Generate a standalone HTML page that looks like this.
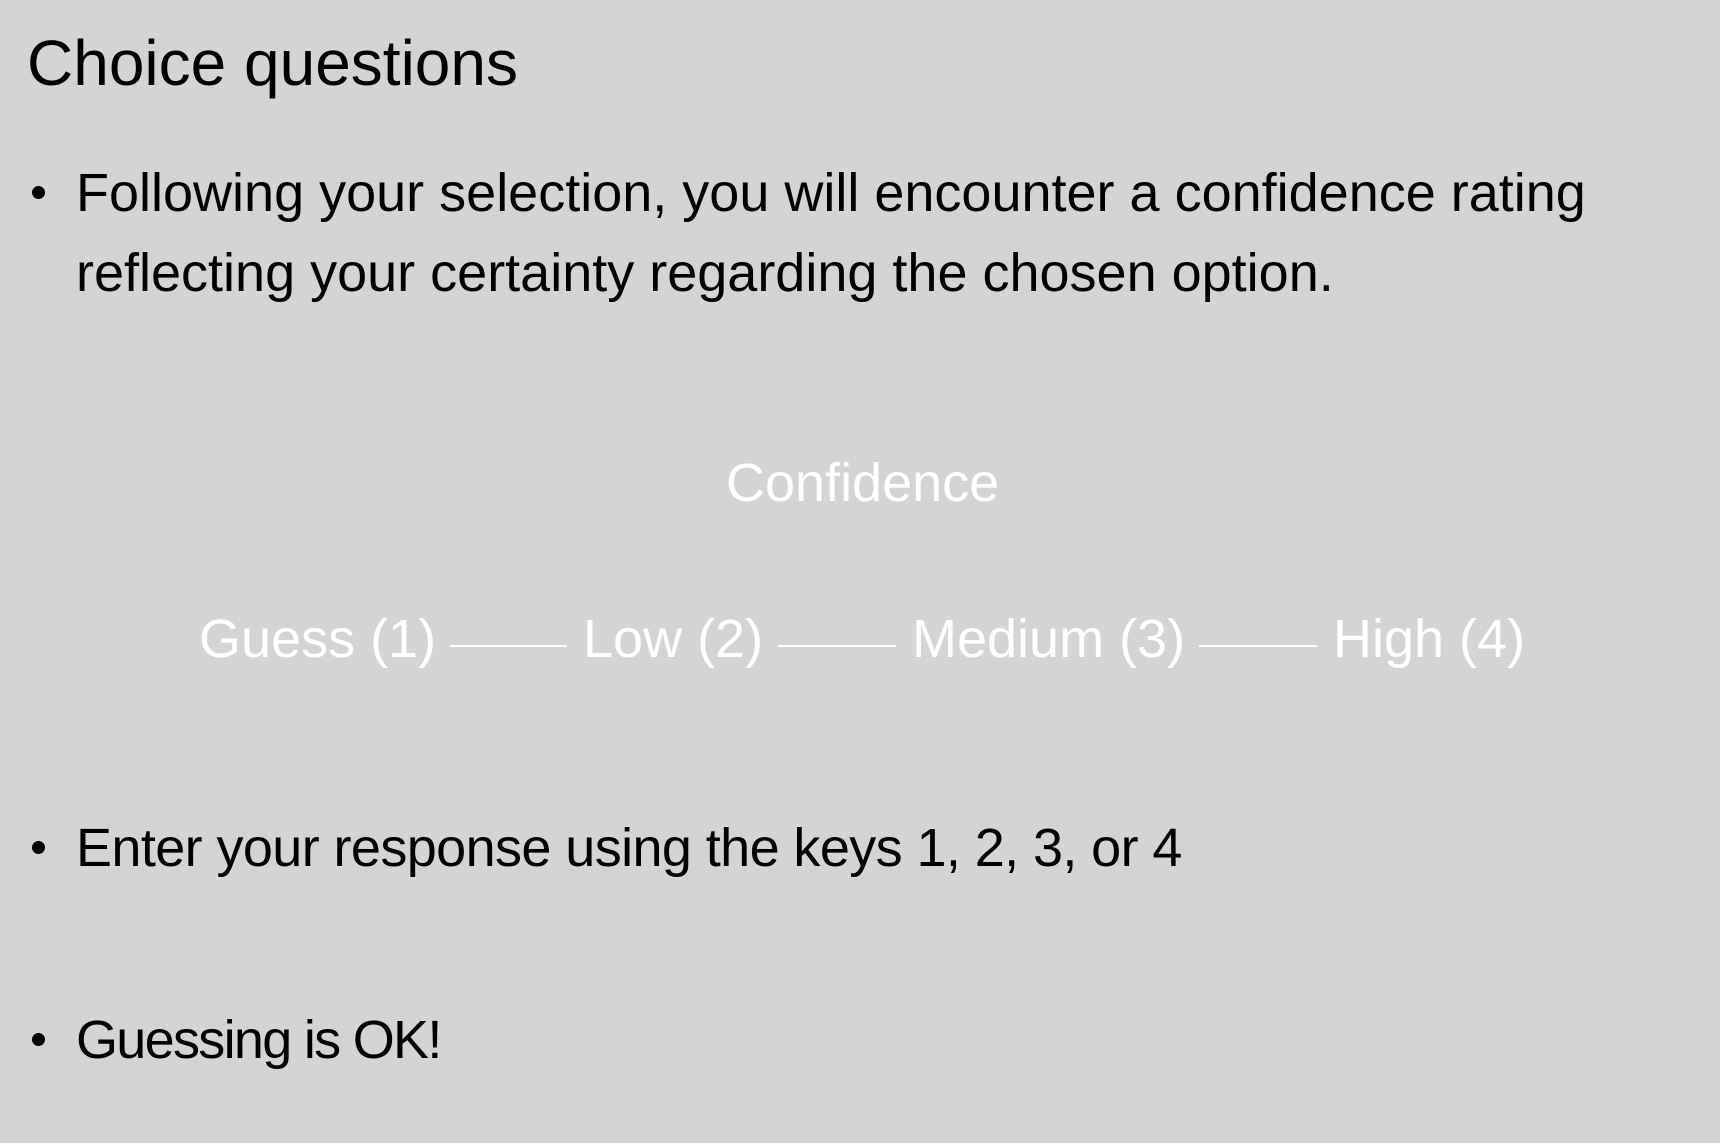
<!DOCTYPE html>
<html><head><meta charset="utf-8"><style>
html,body{margin:0;padding:0}
body{width:1720px;height:1143px;background:#d4d4d4;position:relative;overflow:hidden;font-family:"Liberation Sans",sans-serif}
.t{position:absolute;white-space:nowrap;line-height:1;color:#000}
.w{position:absolute;white-space:nowrap;line-height:1;color:#fff;font-size:54px}
.ln{position:absolute;height:2px;background:#fff;top:645px}
.b{position:absolute;width:13px;height:13px;border-radius:50%;background:#000}
</style></head><body>
<div class="t" style="left:27px;top:31px;font-size:64px">Choice questions</div>
<div class="b" style="left:32px;top:186px"></div>
<div class="t" style="left:76px;top:166px;font-size:54px">Following your selection, you will encounter a confidence rating</div>
<div class="t" style="left:76px;top:246px;font-size:54px">reflecting your certainty regarding the chosen option.</div>
<div class="w" style="left:726px;top:456px">Confidence</div>
<div class="w" style="left:199px;top:612px">Guess (1)</div>
<div class="ln" style="left:450px;width:117px"></div>
<div class="w" style="left:583px;top:612px">Low (2)</div>
<div class="ln" style="left:778px;width:118px"></div>
<div class="w" style="left:912px;top:612px">Medium (3)</div>
<div class="ln" style="left:1199px;width:118px"></div>
<div class="w" style="left:1333px;top:612px">High (4)</div>
<div class="b" style="left:32px;top:841px"></div>
<div class="t" style="left:76px;top:821px;font-size:54px;letter-spacing:-0.6px">Enter your response using the keys 1, 2, 3, or 4</div>
<div class="b" style="left:32px;top:1033px"></div>
<div class="t" style="left:76px;top:1013px;font-size:54px;letter-spacing:-1.7px">Guessing is OK!</div>
</body></html>
